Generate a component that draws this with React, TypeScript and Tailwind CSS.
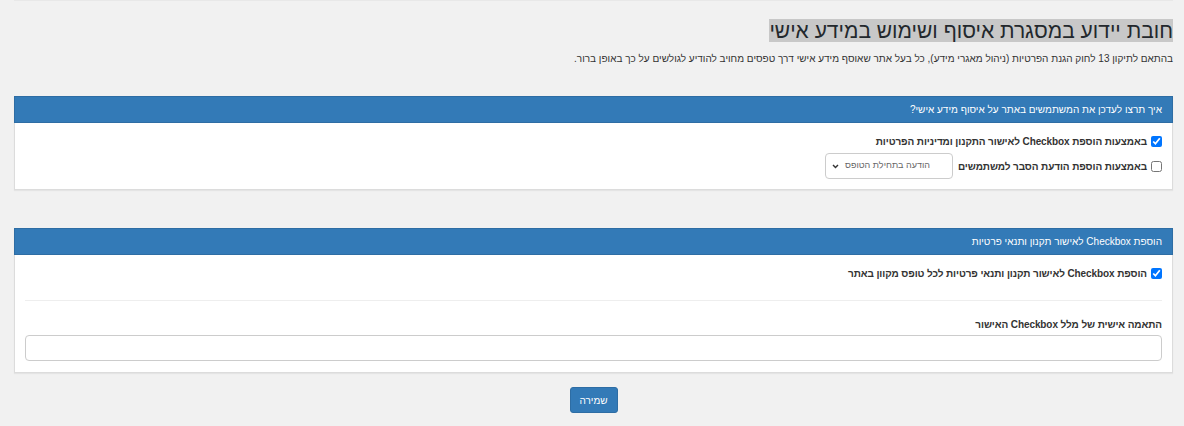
import React from "react";

function Check({ checked }: { checked: boolean }) {
  return (
    <input
      type="checkbox"
      defaultChecked={checked}
      className="w-[11px] h-[11px] m-0 accent-[#0075ff] shrink-0"
    />
  );
}

export default function App() {
  return (
    <div
      dir="rtl"
      className="min-h-[426px] bg-[#f1f1f1] text-[#333] text-[10px] pl-[14px] pr-[11px]"
      style={{ fontFamily: '"Liberation Sans", Arial, sans-serif' }}
    >
      <div className="h-[2px] border-t border-[#e8e8e8]" />
      <h1 className="pt-[16px] text-[21px] leading-[26px] font-normal text-[#23282d]">
        <span className="bg-[#c8c8c8]">חובת יידוע במסגרת איסוף ושימוש במידע אישי</span>
      </h1>
      <p className="mt-[7px] leading-[16px]">
        בהתאם לתיקון 13 לחוק הגנת הפרטיות (ניהול מאגרי מידע), כל בעל אתר שאוסף מידע אישי דרך טפסים מחויב להודיע לגולשים על כך באופן ברור.
      </p>

      <div className="mt-[29px] bg-white border border-[#dcdcdc] shadow-[0_1px_1px_rgba(0,0,0,0.05)]">
        <div className="h-[27px] bg-[#337ab7] border border-[#2e6da4] -m-px text-white flex items-center px-[10px]">
          איך תרצו לעדכן את המשתמשים באתר על איסוף מידע אישי?
        </div>
        <div className="px-[10px] pt-[12px] pb-[10px]">
          <label className="flex items-center gap-[4px] font-bold h-[14px] tracking-[-0.1px]">
            <Check checked />
            <span>באמצעות הוספת Checkbox לאישור התקנון ומדיניות הפרטיות</span>
          </label>
          <div className="flex items-center gap-[4px] font-bold mt-[5px] tracking-[-0.1px]">
            <Check checked={false} />
            <span>באמצעות הוספת הודעת הסבר למשתמשים</span>
            <div className="relative w-[128px] h-[26px] mr-[1px] border border-[#ccc] rounded-[4px] bg-white font-normal tracking-normal text-[#666] flex items-center">
              <span className="pr-[22px] whitespace-nowrap text-[9px]">הודעה בתחילת הטופס</span>
              <svg
                className="absolute left-[6px] top-[10px]"
                width="7"
                height="5"
                viewBox="0 0 7 5"
                fill="none"
                stroke="#333"
                strokeWidth="1.4"
              >
                <path d="M1 1 L3.5 3.6 L6 1" />
              </svg>
            </div>
          </div>
        </div>
      </div>

      <div className="mt-[38px] bg-white border border-[#dcdcdc] shadow-[0_1px_1px_rgba(0,0,0,0.05)]">
        <div className="h-[27px] bg-[#337ab7] border border-[#2e6da4] -m-px text-white flex items-center px-[10px]">
          הוספת Checkbox לאישור תקנון ותנאי פרטיות
        </div>
        <div className="px-[10px] pt-[12px] pb-[11px]">
          <label className="flex items-center gap-[4px] font-bold h-[14px] tracking-[-0.1px]">
            <Check checked />
            <span>הוספת Checkbox לאישור תקנון ותנאי פרטיות לכל טופס מקוון באתר</span>
          </label>
          <div className="mt-[20px] border-t border-[#eee]" />
          <div className="mt-[17px] font-bold leading-[14px] tracking-[-0.1px]">התאמה אישית של מלל Checkbox האישור</div>
          <input
            type="text"
            className="mt-[3px] block w-full h-[26px] border border-[#ccc] rounded-[4px] bg-white outline-none"
          />
        </div>
      </div>

      <div className="flex justify-center mt-[14px]">
        <button className="w-[48px] h-[26px] bg-[#337ab7] border border-[#2e6da4] rounded-[3px] text-white text-[10px]">
          שמירה
        </button>
      </div>
    </div>
  );
}
